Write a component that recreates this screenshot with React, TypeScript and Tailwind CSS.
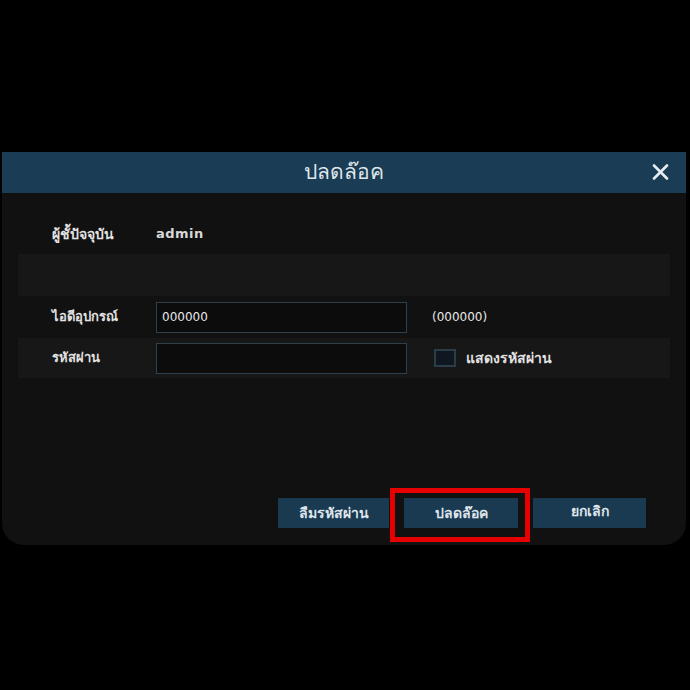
import React from "react";

const thai = { fontFamily: '"DejaVu Sans", "Noto Sans", sans-serif' };

export default function App() {
  return (
    <div className="w-[690px] h-[690px] bg-black pt-[152px] pl-[2px]" style={thai}>
      <div className="w-[684px] h-[393px] bg-[#111111] rounded-b-[22px] flex flex-col overflow-hidden">
        <div className="relative h-[41px] bg-[#1a3c54] flex items-center justify-center shrink-0">
          <span className="text-[21px] text-[#dfe6ea]">ปลดล๊อค</span>
          <svg className="absolute right-[17px] top-[12px]" width="17" height="16" viewBox="0 0 17 16">
            <path d="M2 1.5 L15 14.5 M15 1.5 L2 14.5" stroke="#e6ecef" strokeWidth="2.6" strokeLinecap="round" />
          </svg>
        </div>
        <div className="flex flex-col px-[16px] pt-[21px]">
          <div className="h-[40px] flex items-center">
            <span className="w-[104px] pl-[34px] text-[14px] font-bold text-[#e2e2e2] whitespace-nowrap">ผู้ชั้ปัจจุบัน</span>
            <span className="ml-[34px] text-[13px] font-bold text-[#d8d8d8] tracking-[0.5px]">admin</span>
          </div>
          <div className="h-[42px] bg-[#171717]" />
          <div className="h-[42px] flex items-center">
            <span className="w-[138px] pl-[34px] text-[13px] font-bold text-[#e2e2e2] whitespace-nowrap">ไอดีอุปกรณ์</span>
            <div className="w-[251px] h-[31px] border border-[#2d404b] bg-[#0c0c0c] flex items-center pl-[5px]">
              <span className="text-[12px] text-[#e8e8e8]">000000</span>
            </div>
            <span className="ml-[25px] text-[12px] text-[#e8e8e8]">(000000)</span>
          </div>
          <div className="h-[40px] bg-[#171717] flex items-center">
            <span className="w-[138px] pl-[34px] text-[13px] font-bold text-[#e2e2e2] whitespace-nowrap">รหัสผ่าน</span>
            <div className="w-[251px] h-[31px] border border-[#2d404b] bg-[#0c0c0c]" />
            <div className="ml-[27px] w-[22px] h-[18px] border-2 border-[#2b3d49] bg-[#0f1820]" />
            <span className="ml-[10px] text-[14px] font-bold text-[#e2e2e2] whitespace-nowrap">แสดงรหัสผ่าน</span>
          </div>
        </div>
        <div className="flex-1" />
        <div className="flex justify-end gap-[15px] pr-[40px] pb-[17px]">
          <div className="w-[111px] h-[30px] bg-[#1a3a52] flex items-center justify-center text-[14px] font-bold text-[#dfe5ea]">ลืมรหัสผ่าน</div>
          <div className="relative w-[114px] h-[30px] bg-[#1a3a52] flex items-center justify-center text-[14px] font-bold text-[#dfe5ea]">
            ปลดล๊อค
            <div className="absolute left-[-14px] top-[-10px] w-[140px] h-[54px] border-[5px] border-[#e60000]" />
          </div>
          <div className="w-[113px] h-[30px] bg-[#1a3a52] flex items-center justify-center text-[14px] font-bold text-[#dfe5ea] pb-[4px]">ยกเลิก</div>
        </div>
      </div>
    </div>
  );
}
